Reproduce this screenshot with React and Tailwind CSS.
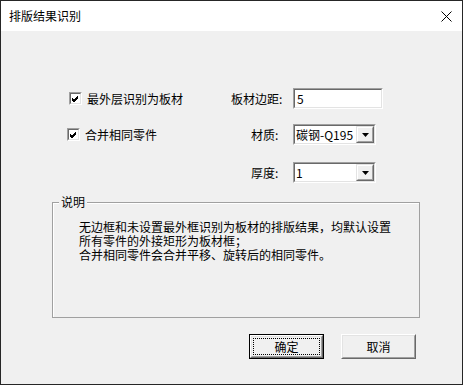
import React from 'react';

const font = { fontFamily: '"Noto Sans CJK SC", "Liberation Sans", sans-serif' };

// classic sunken 2px frame
const Sunken = ({ className = '', children }) => (
  <div className={`border border-t-[#a0a0a0] border-l-[#a0a0a0] border-b-white border-r-white ${className}`}>
    <div className="h-full w-full border border-t-[#696969] border-l-[#696969] border-b-[#e3e3e3] border-r-[#e3e3e3] bg-white">
      {children}
    </div>
  </div>
);

const CheckBox = () => (
  <Sunken className="w-[13px] h-[13px] shrink-0">
    <svg width="9" height="9" viewBox="0 0 9 9" className="block">
      <path d="M1 4 L3 6 L7 2 M1 5 L3 7 L7 3 M1 6 L3 8 L7 4" stroke="#000" strokeWidth="1" fill="none" />
    </svg>
  </Sunken>
);

const Combo = ({ value }) => (
  <Sunken className="w-[83px] h-[21px]">
    <div className="flex h-full items-center justify-between">
      <span className="pl-[1px] text-[12px] leading-[12px]">{value}</span>
      <div className="h-[17px] w-[18px] border border-t-[#e3e3e3] border-l-[#e3e3e3] border-b-[#696969] border-r-[#696969] bg-[#f0f0f0]">
        <div className="flex h-full w-full items-center justify-center border border-t-white border-l-white border-b-[#a0a0a0] border-r-[#a0a0a0]">
          <svg width="7" height="4" viewBox="0 0 7 4" className="block">
            <path d="M0 0 H7 L3.5 4 Z" fill="#000" />
          </svg>
        </div>
      </div>
    </div>
  </Sunken>
);

const Button = ({ children, isDefault }) =>
  isDefault ? (
    <div className="h-[25px] w-[75px] border border-black">
      <div className="h-full w-full border border-t-white border-l-white border-b-[#696969] border-r-[#696969]">
        <div className="h-full w-full border border-t-[#e3e3e3] border-l-[#e3e3e3] border-b-[#a0a0a0] border-r-[#a0a0a0] bg-[#f0f0f0] p-[1px]">
          <div className="flex h-full w-full items-center justify-center border border-dotted border-black text-[12px]">
            {children}
          </div>
        </div>
      </div>
    </div>
  ) : (
    <div className="h-[25px] w-[75px] border border-t-white border-l-white border-b-[#696969] border-r-[#696969]">
      <div className="flex h-full w-full items-center justify-center border border-t-[#e3e3e3] border-l-[#e3e3e3] border-b-[#a0a0a0] border-r-[#a0a0a0] bg-[#f0f0f0] text-[12px]">
        {children}
      </div>
    </div>
  );

export default function App() {
  return (
    <div className="flex h-[385px] w-[463px] flex-col border border-[#262626] bg-[#f0f0f0] text-black" style={font}>
      {/* title bar */}
      <div className="flex h-[30px] shrink-0 items-center justify-between bg-white pl-[8px] pr-[10px]">
        <span className="text-[12px]">排版结果识别</span>
        <svg width="11" height="11" viewBox="0 0 11 11" className="block">
          <path d="M0.5 0.5 L10.5 10.5 M10.5 0.5 L0.5 10.5" stroke="#000" strokeWidth="1" />
        </svg>
      </div>

      {/* body */}
      <div className="flex flex-col pt-[57px] text-[12px]">
        <div className="flex h-[21px] items-center">
          <div className="flex w-[230px] items-center gap-[5px] pl-[68px]">
            <CheckBox />
            <span>最外层识别为板材</span>
          </div>
          <span className="w-[62px]">板材边距:</span>
          <Sunken className="h-[21px] w-[90px]">
            <div className="flex h-full items-center pl-[2px] text-[12px]">5</div>
          </Sunken>
        </div>

        <div className="mt-[15px] flex h-[21px] items-center">
          <div className="flex w-[230px] items-center gap-[5px] pl-[66px]">
            <CheckBox />
            <span>合并相同零件</span>
          </div>
          <span className="w-[62px] pl-[20px]">材质:</span>
          <Combo value="碳钢-Q195" />
        </div>

        <div className="mt-[17px] flex h-[21px] items-center">
          <div className="w-[230px]" />
          <span className="w-[62px] pl-[20px]">厚度:</span>
          <Combo value="1" />
        </div>

        {/* group box */}
        <div className="relative ml-[51px] mt-[19px] h-[116px] w-[368px] border border-[#a0a0a0] shadow-[inset_1px_1px_0_#ffffff]">
          <span className="absolute left-[6px] top-[-8px] bg-[#f0f0f0] px-[2px] leading-[14px]">说明</span>
          <div className="pl-[26px] pt-[17px] leading-[14px]">
            <div>无边框和未设置最外框识别为板材的排版结果，均默认设置</div>
            <div>所有零件的外接矩形为板材框；</div>
            <div>合并相同零件会合并平移、旋转后的相同零件。</div>
          </div>
        </div>

        <div className="mt-[16px] flex gap-[17px] pl-[248px]">
          <Button isDefault>确定</Button>
          <Button>取消</Button>
        </div>
      </div>
    </div>
  );
}
